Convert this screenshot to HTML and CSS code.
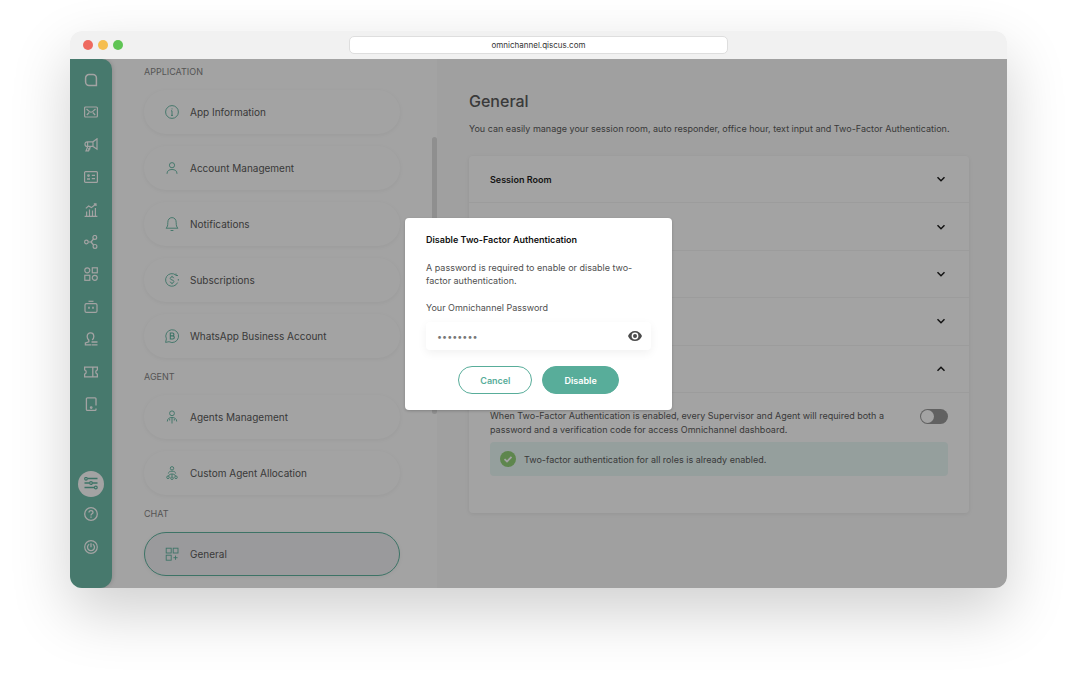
FILE: index.html
```html
<!DOCTYPE html>
<html lang="en">
<head>
<meta charset="utf-8">
<meta name="viewport" content="width=device-width, initial-scale=1">
<title>Omnichannel settings</title>
<link rel="stylesheet" href="styles.css">
</head>
<body>
<div class="window">
  <header class="titlebar">
    <div class="lights"><span class="light light-red"></span><span class="light light-yellow"></span><span class="light light-green"></span></div>
    <input class="address" type="text" value="omnichannel.qiscus.com" aria-label="Address">
  </header>
  <div class="app">
    <nav class="rail" aria-label="Main">
      <div class="rail-main">
        <a class="rail-link" href="#" aria-label="Home"><svg viewBox="0 0 14 14"><path d="M12.400 12.400H5A3.400 3.400 0 0 1 1.600 9V5A3.400 3.400 0 0 1 5 1.600h4A3.400 3.400 0 0 1 12.400 5z" stroke-width="1.500"/></svg></a>
        <a class="rail-link" href="#" aria-label="Inbox"><svg viewBox="0 0 14 14"><rect x=".6" y="2" width="12.800" height="10" rx="1"/><path d="M2.500 4l3 2.600q1.500 1.200 3 0l3-2.600M2.800 10l2.400-2.500M11.200 10L8.800 7.500"/></svg></a>
        <a class="rail-link" href="#" aria-label="Broadcast"><svg viewBox="0 0 14 14"><path d="M13 .8v10.400L9 8.400H3.200A2.200 2.200 0 0 1 1 6.200V6a2.200 2.200 0 0 1 2.200-2.200H9zM9 3.800v4.600M3.800 8.400L2 12.800h2.600l1.800-4.400M3.600 3.800v4.600M4 10.800h2.400"/></svg></a>
        <a class="rail-link" href="#" aria-label="Contacts"><svg viewBox="0 0 14 14"><rect x=".6" y="1.600" width="12.800" height="10.800" rx="1"/><path d="M7.800 5.400h3.200M7.800 8.600h3.200M3 9h3" stroke-width="1.400"/><circle cx="4.500" cy="5.600" r=".8"/></svg></a>
        <a class="rail-link" href="#" aria-label="Analytics"><svg viewBox="0 0 14 14"><path d="M.6 13.300h12.800M2.600 13V8.500M5.500 13V6.500M8.500 13V7.500M11.400 13V5M1.800 5.400L4.600 3l2.800 1.600L12 1M9.800.8H12V3"/></svg></a>
        <a class="rail-link" href="#" aria-label="Integration"><svg viewBox="0 0 14 14"><circle cx="2.400" cy="7" r="1.800"/><circle cx="10.800" cy="2.400" r="1.900"/><circle cx="11" cy="11.400" r="1.900"/><path d="M4.200 7h3M7 7l2.600-3.200M7 7l2.600 3"/></svg></a>
        <a class="rail-link" href="#" aria-label="App center"><svg viewBox="0 0 14 14"><circle cx="3.300" cy="3.300" r="2.500"/><rect x="8.300" y=".8" width="5" height="5"/><rect x=".8" y="8.300" width="5" height="5"/><circle cx="10.800" cy="10.800" r="2.500"/></svg></a>
        <a class="rail-link" href="#" aria-label="Bot"><svg viewBox="0 0 14 14"><rect x="1" y="3.600" width="12" height="8.800" rx="1.500"/><path d="M4.500 1.300h5" /><path d="M4.200 7.800h1.600M8.200 7.800h1.600" stroke-width="2"/></svg></a>
        <a class="rail-link" href="#" aria-label="Agents"><svg viewBox="0 0 14 14"><path d="M7 12.800H1.400v-1.800l3.400-1.200v-1.800C3.700 7.200 3.200 5.800 3.200 4.400 3.200 2.300 4.500.8 6.500.8s3.300 1.500 3.300 3.600c0 1.500-.6 2.800-1.700 3.500M7.500 10h6M7.500 12.800h6" stroke-width="1.300"/></svg></a>
        <a class="rail-link" href="#" aria-label="Tickets"><svg viewBox="0 0 14 14"><path d="M.6 2.200h12.800v2.600a2.300 2.300 0 0 0 0 4.400v2.600H.6V9.200a2.300 2.300 0 0 0 0-4.400zM8.800 2.200v9.600" stroke-width="1.300"/></svg></a>
        <a class="rail-link" href="#" aria-label="Device"><svg viewBox="0 0 14 14"><path d="M12 8.600V1.800a1 1 0 0 0-1-1H3.400a1 1 0 0 0-1 1v10.600a1 1 0 0 0 1 1H11a1 1 0 0 0 1-1v-1" stroke-width="1.300"/><circle cx="7.200" cy="10.600" r=".8"/></svg></a>
      </div>
      <div class="rail-foot">
        <a class="rail-link rail-active" href="#" aria-label="Settings" aria-current="page"><svg viewBox="0 0 14 14"><path d="M3.500 1.500H13.500M.5 6h5M8.500 6h5M.5 10.500H10" stroke-width="1.500"/><circle cx="2" cy="1.800" r="1.300"/><circle cx="7" cy="6" r="1.400"/><circle cx="11.800" cy="10.500" r="1.400"/></svg></a>
        <a class="rail-link" href="#" aria-label="Help"><svg viewBox="0 0 14 14"><circle cx="7" cy="7" r="6.300" stroke-width="1.300"/><path d="M5 5.500C5 4.300 5.800 3.600 7 3.600s2 .7 2 1.800c0 1.400-2 1.500-2 3M7 9.600v1.200" stroke-width="1.300"/></svg></a>
        <a class="rail-link" href="#" aria-label="Log out"><svg viewBox="0 0 14 14"><circle cx="7" cy="7" r="6.300"/><path d="M5.200 4.200a3.500 3.500 0 1 0 3.600 0M7 3.200v4" stroke-width="1.300"/></svg></a>
      </div>
    </nav>

    <aside class="settings">
      <section class="group">
        <h2 class="group-title">APPLICATION</h2>
        <a class="item" href="#"><svg viewBox="0 0 14 14"><circle cx="7" cy="7" r="6.400"/><path d="M7 5.800v4.600M6 5.800h1M6 10.400h2M7 3.400v1"/></svg>App Information</a>
        <a class="item" href="#"><svg viewBox="0 0 14 14"><circle cx="7" cy="4.200" r="2.600"/><path d="M2 12.800c0-3 2-4.300 5-4.300s5 1.300 5 4.300"/></svg>Account Management</a>
        <a class="item" href="#"><svg viewBox="0 0 14 14"><path d="M1 11.200h12c-1.500-1.300-1.800-2.600-1.800-5.600C11.200 2.600 9.600.6 7 .6S2.800 2.600 2.800 5.600c0 3-.3 4.300-1.800 5.600zM5.600 13.500h2.800"/></svg>Notifications</a>
        <a class="item" href="#"><svg viewBox="0 0 14 14"><path d="M12.600 9.600A6.300 6.300 0 1 1 10.800 2M13.300 7.600V6M11 .5v2h2M8.900 5.200C8.700 4.300 8 4 7 4c-1.100 0-1.800.5-1.800 1.400 0 2 3.700 1.100 3.700 3.100C8.900 9.500 8.100 10 7 10s-1.900-.5-1.900-1.400M7 2.900V4M7 10v1.200"/></svg>Subscriptions</a>
        <a class="item" href="#"><svg viewBox="0 0 14 14"><path d="M.6 13.400l.8-3.500A6.400 6.400 0 1 1 4 12.700z"/><path d="M5.300 4v6h2.300c2.300 0 2.300-3.100 0-3.100H5.300h2.100c2 0 2-2.900 0-2.900z" stroke-width="1.100"/></svg>WhatsApp Business Account</a>
      </section>
      <section class="group">
        <h2 class="group-title">AGENT</h2>
        <a class="item" href="#"><svg viewBox="0 0 14 14"><circle cx="7" cy="3.300" r="2.400"/><path d="M2.300 11.500c0-2.700 1.900-4 4.700-4s4.700 1.300 4.700 4M7 7.500v6M4.700 9v1.500M9.300 9v1.500"/></svg>Agents Management</a>
        <a class="item" href="#"><svg viewBox="0 0 14 14"><circle cx="7" cy="2.300" r="1.700"/><path d="M3.400 7.500c0-1.500 1.500-2.300 3.600-2.300s3.600.8 3.600 2.300M7 8v2.500M3.500 10c.5-1.500 2-2 3.500-2s3 .5 3.500 2"/><circle cx="3" cy="11.300" r="1.300"/><circle cx="7" cy="12.200" r="1.300"/><circle cx="11" cy="11.300" r="1.300"/></svg>Custom Agent Allocation</a>
      </section>
      <section class="group">
        <h2 class="group-title">CHAT</h2>
        <a class="item item-active" href="#"><svg viewBox="0 0 14 14"><rect x="1.200" y="1.200" width="5" height="4.800"/><rect x="8.200" y="1.200" width="4.800" height="4.800"/><rect x="1.200" y="8.200" width="5" height="5"/><path d="M10.500 8.600v4.200M8.400 10.700h4.200"/></svg>General</a>
      </section>
      <div class="scroll-thumb"></div>
    </aside>

    <main class="content">
      <h1 class="title">General</h1>
      <p class="lead">You can easily manage your session room, auto responder, office hour, text input and Two-Factor Authentication.</p>
      <div class="panel">
        <div class="rows">
          <button class="row" type="button">Session Room<svg viewBox="0 0 10 10"><path d="M1.500 3.200L5 6.700l3.500-3.500"/></svg></button>
          <button class="row" type="button" aria-label="Auto responder"><svg viewBox="0 0 10 10"><path d="M1.500 3.200L5 6.700l3.500-3.500"/></svg></button>
          <button class="row" type="button" aria-label="Office hour"><svg viewBox="0 0 10 10"><path d="M1.500 3.200L5 6.700l3.500-3.500"/></svg></button>
          <button class="row" type="button" aria-label="Text input"><svg viewBox="0 0 10 10"><path d="M1.500 3.200L5 6.700l3.500-3.500"/></svg></button>
          <button class="row" type="button" aria-label="Two-factor" aria-expanded="true"><svg viewBox="0 0 10 10"><path d="M1.500 6.700L5 3.200l3.500 3.500"/></svg></button>
        </div>
        <div class="details">
          <div class="option">
            <label class="option-text" for="two-factor">When Two-Factor Authentication is enabled, every Supervisor and Agent will required both a password and a verification code for access Omnichannel dashboard.</label>
            <input class="switch" id="two-factor" type="checkbox">
          </div>
          <p class="notice"><svg viewBox="0 0 16 16"><circle cx="8" cy="8" r="8"/><path d="M4.500 8.200L7 10.500l4.500-4.700"/></svg>Two-factor authentication for all roles is already enabled.</p>
        </div>
      </div>
    </main>

    <div class="overlay">
      <form class="dialog" role="dialog" aria-labelledby="dialog-title">
        <h2 class="dialog-title" id="dialog-title">Disable Two-Factor Authentication</h2>
        <p class="dialog-text">A password is required to enable or disable two-factor authentication.</p>
        <label class="dialog-label" for="password">Your Omnichannel Password</label>
        <div class="field">
          <input class="password" id="password" type="password" value="password">
          <button class="reveal" type="button" aria-label="Show password"><svg viewBox="0 0 14 10"><path fill-rule="evenodd" d="M7 0C3.800 0 1.100 2 0 5c1.100 3 3.800 5 7 5s5.900-2 7-5C12.900 2 10.200 0 7 0zm0 8.400a3.400 3.400 0 1 1 0-6.800 3.400 3.400 0 0 1 0 6.800zM7 3a2 2 0 1 0 0 4 2 2 0 0 0 0-4z"/></svg></button>
        </div>
        <div class="actions">
          <button class="button button-outline" type="button">Cancel</button>
          <button class="button button-solid" type="button">Disable</button>
        </div>
      </form>
    </div>
  </div>
</div>
</body>
</html>
```
FILE: styles.css
```css
* {
  box-sizing: border-box;
}

body {
  margin: 0;
  padding: 31px 70px 109px;
  min-height: 100vh;
  display: flex;
  background: #fff;
  color: #505050;
  font-family: Inter, "Liberation Sans", sans-serif;
  font-size: 9px;
  line-height: 13px;
}

h1, h2, p {
  margin: 0;
}

button, input {
  font: inherit;
  color: inherit;
}

a {
  color: inherit;
  text-decoration: none;
}

svg {
  display: block;
  flex: none;
  fill: none;
  stroke: currentColor;
}

.window {
  flex: 1;
  display: flex;
  flex-direction: column;
  border-radius: 12px;
  box-shadow: 0 24px 60px rgba(0, 0, 0, 0.19);
}

.titlebar {
  height: 28px;
  display: grid;
  grid-template-columns: 1fr minmax(0, 379px) 1fr;
  align-items: center;
  background: #f1f1f1;
  border-radius: 12px 12px 0 0;
}

.lights {
  display: flex;
  gap: 5px;
  padding-left: 13px;
}

.light {
  width: 10px;
  height: 10px;
  border-radius: 50%;
}

.light-red { background: #ee6a5f; }
.light-yellow { background: #f5be4f; }
.light-green { background: #5fc454; }

.address {
  height: 18px;
  min-width: 0;
  padding: 0;
  border: 1px solid #dedede;
  border-radius: 5px;
  background: #fff;
  color: #333;
  font-size: 8px;
  text-align: center;
}

.app {
  flex: 1;
  position: relative;
  display: flex;
  overflow: hidden;
  background: #fff;
  border-radius: 0 0 12px 12px;
}

.rail {
  width: 42px;
  flex: none;
  display: flex;
  flex-direction: column;
  gap: 60px;
  padding: 14px 0 34px;
  background: #67b9a5;
  color: #fff;
  border-radius: 0 10px 12px 0;
  box-shadow: 1px 0 4px rgba(0, 0, 0, 0.14);
}

.rail-main {
  flex: 1;
  display: flex;
  flex-direction: column;
  align-items: center;
  justify-content: space-between;
}

.rail-foot {
  display: flex;
  flex-direction: column;
  align-items: center;
  gap: 19px;
}

.rail-link svg {
  width: 14px;
  height: 14px;
  stroke-width: 1.2;
}

.rail-active {
  margin-bottom: -9px;
  padding: 6px;
  border-radius: 50%;
  background: #fff;
  color: #55b09a;
}

.settings {
  position: relative;
  width: 325px;
  flex: none;
  display: flex;
  flex-direction: column;
  gap: 13px;
  padding: 7px 37px 11px 32px;
}

.group {
  display: flex;
  flex-direction: column;
  gap: 12px;
}

.group-title {
  color: #7c7c7c;
  font-size: 9px;
  font-weight: 400;
  line-height: 12px;
}

.item {
  height: 44px;
  display: flex;
  align-items: center;
  gap: 11px;
  padding-left: 20px;
  border: 1px solid transparent;
  border-radius: 22px;
  font-size: 10px;
  box-shadow: 0 1px 4px rgba(0, 0, 0, 0.06);
}

.item svg {
  width: 14px;
  height: 14px;
  color: #55b09a;
  stroke-width: 0.9;
}

.item-active {
  border-color: #55b09a;
  background: #f1f1f4;
}

.scroll-thumb {
  position: absolute;
  top: 78px;
  right: 0;
  width: 5px;
  height: 277px;
  border-radius: 3px;
  background: #dedede;
}

.content {
  flex: 1;
  min-width: 0;
  padding: 32px 38px 74px 32px;
  background: #fafafa;
}

.title {
  font-size: 16px;
  font-weight: 500;
  line-height: 20px;
}

.lead {
  margin: 11px 0 21px;
}

.panel {
  background: #fff;
  border-radius: 4px;
  box-shadow: 0 1px 4px rgba(0, 0, 0, 0.08);
}

.rows {
  display: grid;
  grid-auto-rows: 1fr;
  min-height: 237px;
}

.row {
  display: flex;
  align-items: center;
  padding: 0 23px 0 21px;
  border: 0;
  border-bottom: 1px solid #f3f3f3;
  background: none;
  color: #111;
  font-weight: 600;
}

.row svg {
  width: 10px;
  height: 10px;
  margin-left: auto;
  stroke-width: 1.5;
}

.details {
  padding: 16px 21px 37px;
}

.option {
  display: flex;
  align-items: flex-start;
  justify-content: space-between;
  gap: 20px;
  margin-bottom: 5px;
}

.option-text {
  line-height: 14px;
}

.switch {
  appearance: none;
  width: 28px;
  height: 15px;
  flex: none;
  margin: 0;
  padding: 1px;
  border-radius: 8px;
  background: #929292;
}

.switch::before {
  content: "";
  display: block;
  width: 13px;
  height: 13px;
  border-radius: 50%;
  background: #fff;
}

.notice {
  min-height: 34px;
  display: flex;
  align-items: center;
  gap: 8px;
  padding: 0 10px;
  border-radius: 4px;
  background: #e8f8f6;
}

.notice svg {
  width: 16px;
  height: 16px;
  fill: #8ccf70;
  stroke: none;
}

.notice path {
  fill: none;
  stroke: #fff;
  stroke-width: 1.8;
}

.overlay {
  position: absolute;
  inset: 0;
  display: flex;
  align-items: center;
  justify-content: center;
  padding-bottom: 19px;
  background: rgba(25, 25, 25, 0.4);
}

.dialog {
  width: 267px;
  padding: 15px 21px 16px;
  border-radius: 4px;
  background: #fff;
  color: #505050;
  box-shadow: 0 1px 3px rgba(0, 0, 0, 0.2);
}

.dialog-title {
  color: #111;
  font-size: 9px;
  font-weight: 600;
  line-height: 13px;
}

.dialog-text {
  margin: 15px 0 14px;
}

.dialog-label {
  display: block;
  margin-bottom: 8px;
}

.field {
  height: 28px;
  display: flex;
  align-items: center;
  padding: 0 9px 0 11px;
  border-radius: 4px;
  background: #fff;
  box-shadow: 0 3px 10px rgba(0, 0, 0, 0.06);
}

.password {
  flex: 1;
  min-width: 0;
  padding: 0;
  border: 0;
  outline: 0;
  background: none;
  color: #777;
}

.reveal {
  padding: 0;
  border: 0;
  background: none;
}

.reveal svg {
  width: 14px;
  height: 10px;
  fill: #4c4c4c;
  stroke: none;
}

.actions {
  display: flex;
  justify-content: center;
  gap: 10px;
  margin-top: 16px;
}

.button {
  height: 28px;
  padding: 0 21px;
  border: 1px solid #58ad9a;
  border-radius: 14px;
  font-weight: 600;
}

.button-outline {
  background: #fff;
  color: #58ad9a;
}

.button-solid {
  background: #58ad9a;
  color: #fff;
}
```
